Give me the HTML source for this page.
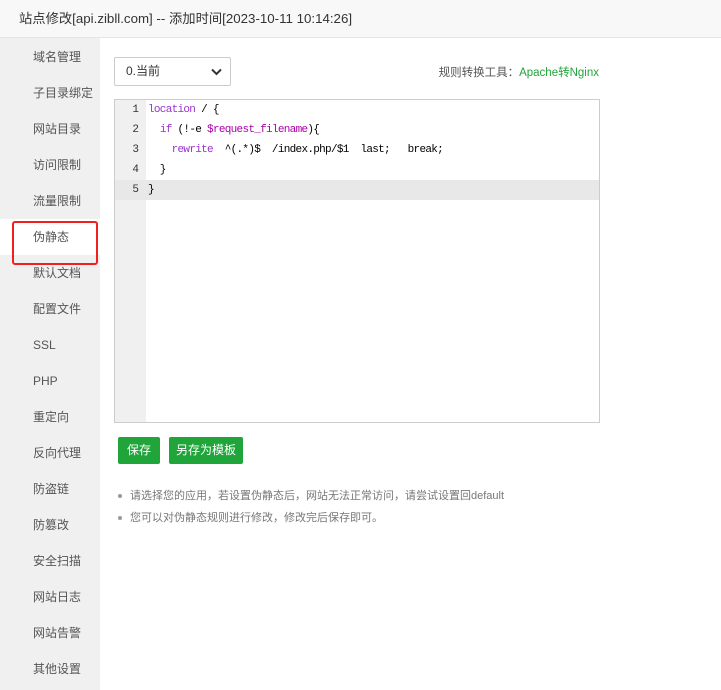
<!DOCTYPE html>
<html><head><meta charset="utf-8"><style>
*{margin:0;padding:0;box-sizing:border-box}
body{width:721px;height:690px;overflow:hidden;background:#fff;font-family:"Liberation Sans","Noto Sans CJK SC",sans-serif;position:relative}
.hd{position:absolute;left:0;top:0;width:721px;height:38px;background:#f8f8f8;border-bottom:1px solid #e6e6e6;font-size:13.3px;color:#333;line-height:38px;padding-left:19px}
.sb{position:absolute;left:0;top:38px;width:100px;height:652px;background:#f0f0f0}
.sb div{position:absolute;left:0;width:100px;height:36px;line-height:36px;padding-left:33px;font-size:12px;color:#555}
.sb .act{background:#fff}
.red{position:absolute;left:12px;top:221px;width:86px;height:44px;border:2px solid #f02020;border-radius:3px}
.sel{position:absolute;left:114px;top:57px;width:117px;height:29px;border:1px solid #ccc;border-radius:2px;font-size:12px;color:#333;line-height:27px;padding-left:11px}
.sel svg{position:absolute;right:8px;top:10px}
.tool{position:absolute;right:122px;top:64px;font-size:11.5px;color:#555}
.tool span{color:#20a53a}
.ed{position:absolute;left:114px;top:99px;width:486px;height:324px;border:1px solid #ccc;background:#fff;font-family:"Liberation Mono","DejaVu Sans Mono",monospace;font-size:11px;letter-spacing:-0.7px}
.gut{position:absolute;left:0;top:0;width:31px;height:100%;background:#f0f0f0}
.ln{position:absolute;left:0;height:20px;line-height:20px;width:100%}
.ln .n{position:absolute;left:0;width:24px;text-align:right;color:#333;letter-spacing:0}
.ln .c{position:absolute;left:33px;white-space:pre;color:#000}
.k{color:#93c}.v{color:#a0a}
.btn{position:absolute;top:437px;height:27px;line-height:27px;background:#20a53a;color:#fff;font-size:12px;border-radius:2px;text-align:center}
ul{position:absolute;left:118px;top:487px;list-style:none;font-size:11px;color:#777}
li{height:22px;line-height:18px;position:relative;padding-left:12px}
li:before{content:"";position:absolute;left:0;top:7px;width:4px;height:4px;border-radius:50%;background:#999}
</style></head><body>
<div class="hd">站点修改[api.zibll.com] -- 添加时间[2023-10-11 10:14:26]</div>
<div class="sb">
<div style="top:1px">域名管理</div><div style="top:37px">子目录绑定</div><div style="top:73px">网站目录</div><div style="top:109px">访问限制</div><div style="top:145px">流量限制</div><div class="act" style="top:181px">伪静态</div><div style="top:217px">默认文档</div><div style="top:253px">配置文件</div><div style="top:289px">SSL</div><div style="top:325px">PHP</div><div style="top:361px">重定向</div><div style="top:397px">反向代理</div><div style="top:433px">防盗链</div><div style="top:469px">防篡改</div><div style="top:505px">安全扫描</div><div style="top:541px">网站日志</div><div style="top:577px">网站告警</div><div style="top:613px">其他设置</div>
</div>
<div class="red"></div>
<div class="sel">0.当前<svg width="11" height="8" viewBox="0 0 11 8"><path d="M1 1.5l4.5 4.5 4.5-4.5" stroke="#333" stroke-width="2" fill="none"/></svg></div>
<div class="tool">规则转换工具：<span>Apache转Nginx</span></div>
<div class="ed"><div class="gut"></div>
<div class="ln" style="top:80px;background:#e8e8e8"></div>
<div class="ln" style="top:0"><span class="n">1</span><span class="c"><span class="k">location</span> / {</span></div>
<div class="ln" style="top:20px"><span class="n">2</span><span class="c">  <span class="k">if</span> (!-e <span class="v">$request_filename</span>){</span></div>
<div class="ln" style="top:40px"><span class="n">3</span><span class="c">    <span class="k">rewrite</span>  ^(.*)$  /index.php/$1  last;   break;</span></div>
<div class="ln" style="top:60px"><span class="n">4</span><span class="c">  }</span></div>
<div class="ln" style="top:80px"><span class="n">5</span><span class="c">}</span></div>
</div>
<div class="btn" style="left:118px;width:42px">保存</div>
<div class="btn" style="left:169px;width:74px">另存为模板</div>
<ul><li>请选择您的应用，若设置伪静态后，网站无法正常访问，请尝试设置回default</li><li>您可以对伪静态规则进行修改，修改完后保存即可。</li></ul>
</body></html>
